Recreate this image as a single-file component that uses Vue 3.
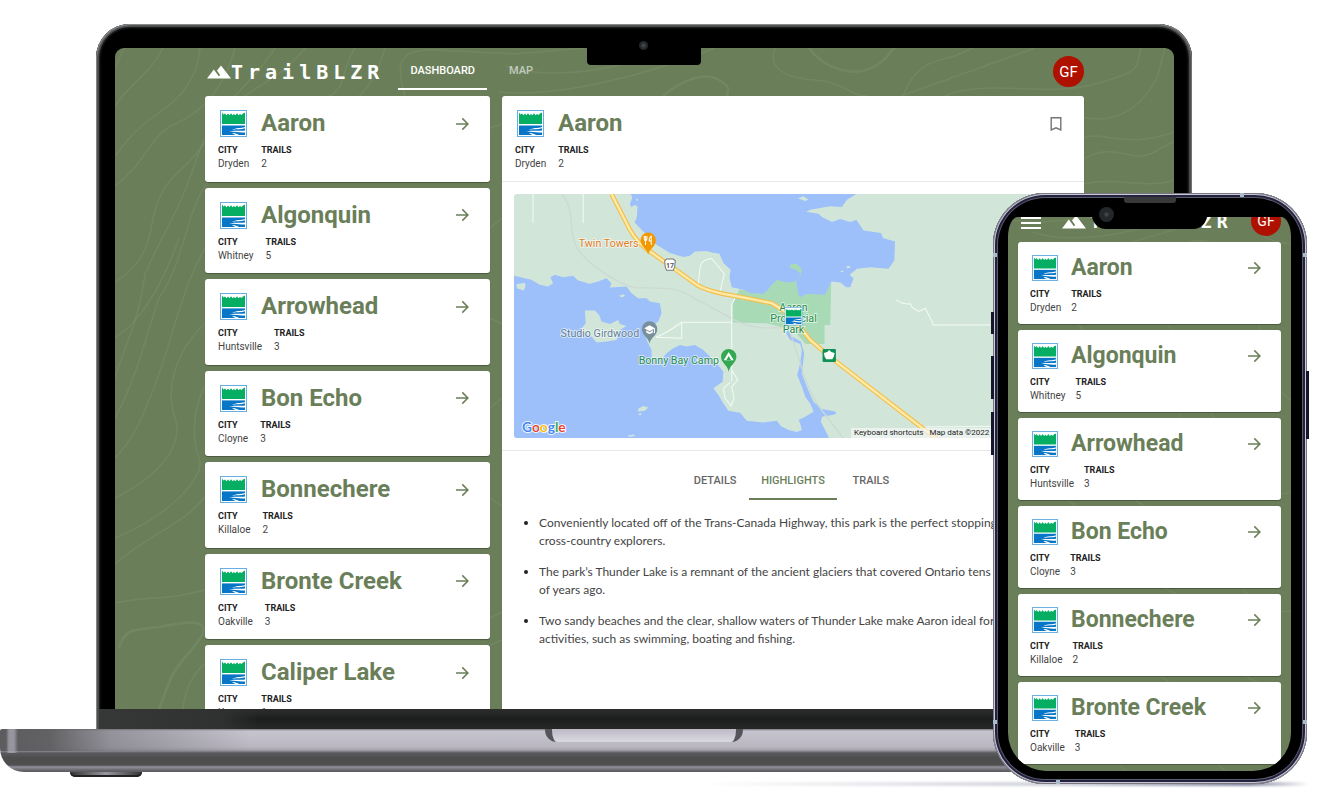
<script setup>
import { ref } from 'vue'

const parks = [
  { name: 'Aaron', city: 'Dryden', trails: 2 },
  { name: 'Algonquin', city: 'Whitney', trails: 5 },
  { name: 'Arrowhead', city: 'Huntsville', trails: 3 },
  { name: 'Bon Echo', city: 'Cloyne', trails: 3 },
  { name: 'Bonnechere', city: 'Killaloe', trails: 2 },
  { name: 'Bronte Creek', city: 'Oakville', trails: 3 },
  { name: 'Caliper Lake', city: 'Kenora', trails: 1 },
]
const phoneParks = parks.slice(0, 6)
const current = parks[0]
const pages = ['Dashboard', 'Map']
const page = ref('Dashboard')
const sections = ['Details', 'Highlights', 'Trails']
const section = ref('Highlights')
const highlights = [
  'Conveniently located off of the Trans-Canada Highway, this park is the perfect stopping point for cross\u2011country explorers.',
  'The park’s Thunder Lake is a remnant of the ancient glaciers that covered Ontario tens of thousands of years ago.',
  'Two sandy beaches and the clear, shallow waters of Thunder Lake make Aaron ideal for water activities, such as swimming, boating and fishing.',
]
const highway = 'M305 13 360 120Q385 165 430 192L500 242 565 288Q590 302 640 312L700 323 785 340 820 362 850 387 900 450 957 499 1280 748'
</script>

<template>
  <div class="scene">
    <svg class="defs" aria-hidden="true">
      <symbol id="park-logo" viewBox="0 0 27 27">
        <rect x="0.5" y="0.5" width="26" height="26" fill="#fff" stroke="#67aee3" />
        <path d="M2 2.600 3.500 4.500 5 3.500 6.500 5.200 8 3.500 9.500 5.200 11 3.200 12.500 5.200 14 4 15.500 5.200 17 3.200 18.500 5.200 20 4 21.500 5 23 3.500 25 2.600V14H2Z" fill="#05ae62" />
        <path d="M2 15.400H25V25H2Z" fill="#0876c6" />
        <path d="M25 17C21 18.600 16 17.400 12 20 17 18.600 21 19.600 25 18.200ZM25 20.400C20 21.600 15 19.600 9 21.600 15 21.400 20 23.200 25 22.400ZM12 23C15 22.600 17 24 19 25H15.500C14 24.200 13 23.600 12 23Z" fill="#fff" />
      </symbol>
      <symbol id="mountains" viewBox="0 0 24 14">
        <path d="M0 13.500 6.800 4.500 10 8.700 11.800 11.300 13.200 10.200 10 5.600 14 0.500 24 13.500Z" fill="#fff" />
      </symbol>
      <symbol id="arrow" viewBox="0 0 14 14">
        <path d="M1 7H12.600M7.300 1.400 12.900 7 7.300 12.600" fill="none" stroke="#6a7f59" stroke-width="1.500" />
      </symbol>
      <symbol id="contours" viewBox="0 0 1059 661" preserveAspectRatio="xMidYMid slice">
        <g fill="none" stroke="#fff" stroke-opacity="0.06" stroke-width="1.500">
          <path d="M9 0 0 20M48 0C34 28 16 34 0 58M85 0C82 36 60 54 42 66S14 90 0 108M120 0C108 44 84 66 60 76S30 116 0 138M190 0C160 40 120 40 96 84 70 130 50 120 38 170 34 200 24 220 0 234" />
          <path d="M160 0C130 46 104 52 84 104 62 170 50 180 30 226 22 280 12 290 0 330M96 130C70 160 72 210 44 250 30 290 22 330 0 370M96 190C70 230 60 280 46 320S20 390 0 410" />
          <path d="M96 270C60 300 50 340 60 370S40 430 0 450M96 330C78 350 76 390 84 410S50 470 0 490M96 440C70 480 40 480 0 516M0 555C34 548 60 552 96 540" />
          <path stroke-width="2.500" d="M4 600C10 578 24 582 44 579 70 574 92 570 88 585 82 600 60 614 52 640L44 661" />
          <path d="M96 612C80 620 70 640 68 661M0 290C30 270 50 230 64 190" />
          <path d="M240 0C226 20 232 40 214 48M270 0C262 26 256 38 244 48M290 48C284 24 276 0 320 2L400 6 470 0M390 18C440 34 510 20 560 0M384 44C440 50 530 28 600 0" />
          <path stroke-width="2.500" d="M548 48C570 30 590 24 604 32S612 44 612 48M694 0C710 22 740 30 760 18S770 6 780 0" />
          <path d="M660 0C652 20 670 30 700 32S734 48 752 48M788 48C800 16 816 14 840 8L858 0M786 48C836 30 870 18 920 0M830 48C870 30 930 50 980 36S1020 20 1026 0M970 70C1010 76 1030 52 1042 30L1050 0" />
          <path d="M968 90C990 82 1010 102 1059 84M968 112C990 96 1010 108 1024 108S1046 98 1059 94M968 136C1000 128 1030 142 1059 132M375 80 387 76M375 180 387 170M375 270 387 276M375 360 387 350M375 450 387 458M375 570 387 564M375 597 387 592" />
          <path d="M400 60C440 120 520 80 560 140S600 300 680 260M420 90C460 180 540 160 560 220S640 360 720 320M400 240C460 260 480 340 560 360S620 480 700 470M410 330C470 340 470 420 540 440S600 560 690 560M400 450C450 460 480 520 530 540S590 640 620 661M640 80C680 120 640 180 700 220M400 560C450 570 470 620 500 661" />
        </g>
      </symbol>
    </svg>

    <section class="laptop" aria-label="Laptop">
      <div class="lid">
        <div class="notch"><i class="lens"></i></div>
        <div class="screen">
          <svg class="contours"><use href="#contours" /></svg>
          <header class="bar">
            <div class="brand">
              <svg class="peaks"><use href="#mountains" /></svg>
              <span class="name">TrailBLZR</span>
            </div>
            <nav class="pages">
              <button
                v-for="item in pages"
                :key="item"
                class="tab"
                :class="{ active: item === page }"
                @click="page = item"
              >{{ item }}</button>
            </nav>
            <button class="avatar">GF</button>
          </header>
          <main class="columns">
            <div class="list">
              <article v-for="park in parks" :key="park.name" class="card">
                <div class="top">
                  <svg class="logo"><use href="#park-logo" /></svg>
                  <h2>{{ park.name }}</h2>
                  <button class="go" :aria-label="'Open ' + park.name">
                    <svg><use href="#arrow" /></svg>
                  </button>
                </div>
                <dl>
                  <div><dt>CITY</dt><dd>{{ park.city }}</dd></div>
                  <div><dt>TRAILS</dt><dd>{{ park.trails }}</dd></div>
                </dl>
              </article>
            </div>

            <section class="detail">
              <div class="summary">
                <div class="top">
                  <svg class="logo"><use href="#park-logo" /></svg>
                  <h2>{{ current.name }}</h2>
                  <button class="go" aria-label="Bookmark">
                    <svg viewBox="0 0 14 14"><path d="M2.200 0.700H11.800V13L7 10.800 2.200 13Z" fill="none" stroke="#757575" stroke-width="1.400" /></svg>
                  </button>
                </div>
                <dl>
                  <div><dt>CITY</dt><dd>{{ current.city }}</dd></div>
                  <div><dt>TRAILS</dt><dd>{{ current.trails }}</dd></div>
                </dl>
              </div>

              <div class="map-area">
                <div class="map">
                  <svg viewBox="13 13 1671 732" preserveAspectRatio="xMinYMin slice" role="img" aria-label="Map of Aaron Provincial Park">
                    <rect x="13" y="13" width="1671" height="740" fill="#d1e6d9" />
                    <path fill="#a8dab5" d="M688 298 722 304 780 260 835 260 832 215 885 220 875 300 963 275 960 405 943 405 943 462 886 462 850 420 770 400 668 398V340Z" />
                    <g fill="#9dc0fb">
                      <path d="M360 13C372 20 366 25 360 44L365 52 374 46 383 50C380 75 385 80 374 98L395 120 440 165 480 190 520 202 540 198 555 185 590 184 605 188 628 192 640 220 662 240 658 262 665 292 700 300 722 310 758 312 770 304 785 285 800 270 830 278 856 275 868 262 870 250 858 240 838 232 842 224 860 222 874 240 870 260 858 275 864 310 870 322 890 312 945 315 963 275 990 278 1008 292 1020 292 1030 265 1018 255 1040 237 1080 232 1135 237 1152 212 1154 155 1118 145 1112 130 1060 122 1038 90 1020 97 990 88 965 97 935 82 925 72 888 66 900 60 960 50 995 52 1010 30 1038 13Z" />
                      <path d="M13 258 65 270 90 285 115 290 130 280 122 262 135 255 160 262 190 258 205 272 240 282 265 275 290 265 305 280 300 293 350 290 365 310 385 325 410 325 420 335 450 340 455 370 445 395 430 405 405 430 412 455 425 480V505L460 502 470 490 490 475 510 465 530 470 555 465 580 480 600 500 620 520 640 545 638 575 610 595 625 615 640 640 655 662 690 668 710 692 760 697 800 692 812 708 835 720 860 726 875 720 870 700 865 690 885 680 910 665 900 640 885 620 875 590 861 555 870 520 875 480 870 462 840 450 828 430 832 422H842V438L872 455 882 490 875 550 890 590 910 635 935 657 975 664 978 670 970 674 935 680 932 695 955 740V753H13Z" />
                    </g>
                    <g fill="#d1e6d9">
                      <path d="M225 362 255 362 268 375 275 395 300 402 325 390 330 402 350 408 330 420 320 450 290 455 260 458 245 440 222 430 214 418 228 400ZM20 283 45 279 48 290 42 302 22 295ZM328 318 340 313 346 318 335 323ZM385 656 400 648 415 652 405 662 384 664ZM355 736 370 733 376 738 356 741ZM864 26 880 20 895 30 884 34ZM1008 230 1018 228 1020 234 1010 236ZM989 244 1000 242 998 248ZM384 672 395 668 392 676ZM377 31 383 26 384 34Z" />
                    </g>
                    <path fill="#a8dab5" d="M856 275 868 262 870 250 858 240 838 232 842 224 860 222 874 240 870 260 858 275Z" />
                    <g fill="none" stroke="#cdd9d3" stroke-width="4">
                      <path d="M155 13C200 60 170 120 205 180 240 230 340 290 380 294 480 295 500 290 560 330 650 370 680 410 760 414H835C870 500 880 600 950 680L1000 745" />
                    </g>
                    <g fill="none" stroke="#f4faf6" stroke-width="3">
                      <path d="M70 13V100M220 13V100M565 285C570 220 570 210 605 206L643 252 630 305M675 325 665 345V575M668 397H515Q470 430 438 442L515 445V397M665 540 683 570 665 590 672 625 663 648 645 625 640 595 660 578M1158 330Q1180 345 1200 342L1205 352 1225 365 1245 355 1268 402V405H1684M1240 711 1684 706" />
                    </g>
                    <path :d="highway" fill="none" stroke="#f3bf4b" stroke-width="14" />
                    <path :d="highway" fill="none" stroke="#fdeaa8" stroke-width="7" />
                    <g>
                      <path d="M464 213 470 208H490L496 213 494 232 490 241H470L466 232Z" fill="#fff" stroke="#777" stroke-width="3" />
                      <text x="480" y="234" text-anchor="middle" font-size="21" font-weight="700" fill="#555">17</text>
                    </g>
                    <g class="labels" font-size="32">
                      <text x="386" y="173" text-anchor="end" fill="#e37c1e">Twin Towers</text>
                      <text x="388" y="440" text-anchor="end" fill="#5d7d94">Studio Girdwood</text>
                      <text x="627" y="522" text-anchor="end" fill="#258d4b">Bonny Bay Camp</text>
                      <g text-anchor="middle" fill="#258d4b">
                        <text x="850" y="364">Aaron</text>
                        <text x="850" y="396">Provincial</text>
                        <text x="850" y="428">Park</text>
                      </g>
                    </g>
                    <path d="M415 195C411 175 392 172 392 151A23 23 0 0 1 438 151C438 172 419 175 415 195Z" fill="#f29900" />
                    <path d="M403 139V148Q403 152 407 153V166M407 139V153M411 139V148Q411 152 407 153M424 166V139Q417 143 418 154H423" fill="none" stroke="#fff" stroke-width="3" />
                    <path d="M419 461C415 440 396 438 396 417A23 23 0 0 1 442 417C442 438 423 440 419 461Z" fill="#78909c" />
                    <path d="M403 415 419 406 435 415 419 424ZM409 421V428Q419 436 429 428V421L419 427ZM432 416H435V430H432Z" fill="#fff" />
                    <path d="M656 545C652 524 633 520 633 500A23 23 0 0 1 679 500C679 520 660 524 656 545Z" fill="#34a853" />
                    <path d="M656 486 671 511H641ZM656 498 649 510H663Z" fill="#fff" fill-rule="evenodd" />
                    <rect x="937" y="477" width="40" height="39" rx="3" fill="#0f9158" />
                    <path d="M957 480 963 486 973 489 971 500 966 508H948L943 500 941 489 951 486Z" fill="#fff" />
                    <use href="#park-logo" x="823" y="350" width="55" height="58" />
                    <text class="google" x="37" y="727" font-size="41"><tspan fill="#4285f4">G</tspan><tspan fill="#ea4335">o</tspan><tspan fill="#fbbc05">o</tspan><tspan fill="#4285f4">g</tspan><tspan fill="#34a853">l</tspan><tspan fill="#ea4335">e</tspan></text>
                  </svg>
                  <div class="credits">
                    <button>Keyboard shortcuts</button>
                    <span>Map data ©2022 Google</span>
                  </div>
                </div>
              </div>

              <nav class="sections">
                <button
                  v-for="item in sections"
                  :key="item"
                  class="tab"
                  :class="{ active: item === section }"
                  @click="section = item"
                >{{ item }}</button>
              </nav>
              <ul class="highlights">
                <li v-for="text in highlights" :key="text">{{ text }}</li>
              </ul>
            </section>
          </main>
        </div>
        <div class="hinge"></div>
      </div>
      <div class="base"><div class="lip"></div></div>
      <div class="foot"></div>
    </section>

    <div class="ground"></div>

    <section class="phone" aria-label="Phone">
      <i class="key mute"></i><i class="key up"></i><i class="key down"></i><i class="key power"></i>
      <i class="band west high"></i><i class="band east high"></i>
      <i class="band west low"></i><i class="band east low"></i>
      <i class="band north"></i><i class="band south"></i>
      <div class="shell">
        <div class="screen">
          <svg class="contours"><use href="#contours" /></svg>
          <header class="bar">
            <button class="menu" aria-label="Menu"><i></i><i></i><i></i></button>
            <div class="brand">
              <svg class="peaks"><use href="#mountains" /></svg>
              <span class="name">TrailBLZR</span>
            </div>
            <button class="avatar">GF</button>
          </header>
          <div class="list">
            <article v-for="park in phoneParks" :key="park.name" class="card">
              <div class="top">
                <svg class="logo"><use href="#park-logo" /></svg>
                <h2>{{ park.name }}</h2>
                <button class="go" :aria-label="'Open ' + park.name">
                  <svg><use href="#arrow" /></svg>
                </button>
              </div>
              <dl>
                <div><dt>CITY</dt><dd>{{ park.city }}</dd></div>
                <div><dt>TRAILS</dt><dd>{{ park.trails }}</dd></div>
              </dl>
            </article>
          </div>
        </div>
      </div>
      <div class="cutout"><i class="lens"></i></div>
      <i class="speaker"></i>
    </section>
  </div>
</template>

<style>
body {
  margin: 0;
  background: #fff;
}
</style>

<style scoped>
.scene {
  position: relative;
  padding-top: 24px;
  overflow: hidden;
  font-family: Roboto, "Liberation Sans", sans-serif;
  color: #333;
}
.defs {
  position: absolute;
  width: 0;
  height: 0;
}
button {
  padding: 0;
  border: 0;
  background: none;
  font: inherit;
  color: inherit;
  cursor: pointer;
}
h2,
dl,
dd {
  margin: 0;
}

/* Laptop */
.laptop {
  width: calc(100% - 31px);
}
.lid {
  position: relative;
  margin: 0 96px;
  padding: 24px 18px 0 19px;
  border-radius: 34px 34px 0 0;
  background: #000;
  box-shadow: inset 1px 1px 1px #8a8b8d, inset -1px 1px 1px #77787a, inset 0 0 0 3px #4a4b4d, inset 0 0 2px 4px #252626;
}
.notch {
  position: absolute;
  z-index: 1;
  top: 22px;
  left: calc(50% - 57px);
  width: 114px;
  height: 19px;
  border-radius: 0 0 4px 4px;
  background: #000;
}
.lens {
  position: absolute;
  border-radius: 50%;
  background: radial-gradient(#41464a 0 1px, #25282a 3px);
}
.notch .lens {
  top: -5px;
  left: 52px;
  width: 9px;
  height: 9px;
}
.screen {
  position: relative;
  overflow: hidden;
  background: #6a7f59;
}
.lid .screen {
  height: 661px;
  padding: 0 90px;
  border-radius: 9px 9px 0 0;
}
.contours {
  position: absolute;
  inset: 0;
  width: 100%;
  height: 100%;
}
.bar {
  position: relative;
  display: flex;
  align-items: center;
}
.lid .bar {
  height: 37px;
  padding: 5px 0 6px;
}
.brand {
  display: flex;
  align-items: center;
  color: #fff;
}
.peaks {
  width: 24px;
  height: 14px;
}
.name {
  font: 700 20px/28px "DejaVu Sans Mono", monospace;
  letter-spacing: 5px;
}
.lid .brand {
  padding-left: 2px;
}
.tab {
  min-width: 68px;
  padding: 0 12px;
  border-bottom: 2px solid transparent;
  font-size: 11px;
  font-weight: 500;
  text-transform: uppercase;
}
.pages {
  display: flex;
  align-self: stretch;
  margin-left: 14px;
}
.pages .tab {
  color: rgba(255, 255, 255, 0.6);
}
.pages .active {
  border-color: #fff;
  color: #fff;
}
.avatar {
  width: 31px;
  height: 31px;
  margin-left: auto;
  border-radius: 50%;
  background: #ae1100;
  color: #fff;
  font-size: 15px;
}
.columns {
  position: relative;
  display: flex;
  align-items: flex-start;
  gap: 12px;
}
.list {
  position: relative;
  display: grid;
  gap: 6px;
}
.lid .list {
  flex: 0 0 285px;
  grid-template-rows: repeat(7, 1fr);
  height: 635px;
}
.card,
.detail {
  border-radius: 3px;
  background: #fff;
  box-shadow: 0 1px 1px rgba(0, 0, 0, 0.3);
}
.card,
.summary {
  padding: 13px 13px 11px;
}
.top {
  display: flex;
  align-items: center;
  height: 29px;
}
.logo {
  width: 27px;
  height: 27px;
  margin: 0 14px 0 2px;
}
h2 {
  font-size: 24px;
  line-height: 29px;
  color: #6a7f59;
}
.go {
  display: flex;
  margin: 0 8px 0 auto;
}
.go svg {
  width: 14px;
  height: 14px;
}
dl {
  display: flex;
  gap: 12px;
  margin-top: 6px;
  font-size: 10px;
  line-height: 13px;
}
dt {
  font-size: 9px;
  font-weight: 700;
  color: #222;
}
dd {
  color: #444;
}
.detail {
  flex: 1;
  min-width: 0;
  min-height: 640px;
}
.summary {
  border-bottom: 1px solid #e8e8e8;
}
.map-area {
  padding: 12px;
  border-bottom: 1px solid #e8e8e8;
}
.map {
  position: relative;
  height: 244px;
  overflow: hidden;
  border-radius: 3px;
}
.map > svg {
  display: block;
  width: 100%;
  height: 100%;
}
.labels text,
.google {
  paint-order: stroke;
  stroke: rgba(255, 255, 255, 0.7);
  stroke-width: 5px;
}
.google {
  font-family: Lato, sans-serif;
  font-weight: 700;
  stroke: #fff;
}
.credits {
  position: absolute;
  right: 0;
  bottom: 0;
  display: flex;
  width: 221px;
  font-size: 8px;
  line-height: 10px;
  color: #222;
  white-space: nowrap;
}
.credits > * {
  padding: 0 3px;
  background: rgba(243, 245, 244, 0.75);
}
.credits span {
  flex: 1;
}
.sections {
  display: flex;
  justify-content: center;
  height: 37px;
  margin-top: 12px;
}
.sections .tab {
  color: #666;
}
.sections .active {
  border-color: #6a7f59;
  color: #6a7f59;
}
.highlights {
  display: grid;
  gap: 13px;
  margin: 14px 12px 0 37px;
  padding: 0;
  font: 12px/18px Lato, sans-serif;
  color: #444;
}
.highlights li::marker {
  color: #222;
}
.hinge {
  height: 20px;
  margin: 0 -15px 0 -16px;
  background: linear-gradient(90deg, #363837, #303231 120px, transparent 160px), linear-gradient(#2c2e2d, #1b1e1d 50%, #252827);
}
.base {
  display: flex;
  justify-content: center;
  height: 43px;
  border-radius: 2px 2px 24px 24px;
  background:
    linear-gradient(90deg, transparent 6px, rgba(175, 172, 186, 0.7) 9px 14px, transparent 18px) 0 0 / 100% 24px no-repeat,
    linear-gradient(90deg, #5c5c5e 0, #626264 50px, rgba(115, 113, 120, 0.6) 110px, transparent 250px) 0 0 / 100% 22px no-repeat,
    linear-gradient(#77777a 0, #c6c4ce 2px, #b9b6c2 18px, #a5a3ad 21px, #5a595e 24px, #4d4d4e 29px, #505050 36px, #92909b 38px, #77757c 40px, #5e5d61 42px);
}
.lip {
  width: 184px;
  height: 13px;
  border: solid #55545a;
  border-width: 0 7px;
  border-radius: 0 0 12px 12px;
  background: linear-gradient(#bdbac6, #dad8df);
}
.foot {
  width: 72px;
  height: 5px;
  margin-left: 70px;
  border-radius: 0 0 8px 8px;
  background: linear-gradient(90deg, #333, #99979f 50%, #333);
  box-shadow: inset 0 -2px #222;
}
.ground {
  height: 4px;
  margin: 5px 10px 16px 700px;
  background: linear-gradient(90deg, transparent, #cfd1da 60%, #8488a0 90%, transparent);
  filter: blur(1px);
}

/* Phone */
.phone {
  position: absolute;
  top: 193px;
  right: 12px;
  width: 314px;
}
.shell {
  padding: 24px 16px 13px 15px;
  border-radius: 52px;
  background: #000;
  box-shadow: inset 0 0 0 1px #777682, inset 0 0 0 2px #c9c8d4, inset 0 0 0 4px #24233f, inset 0 0 0 5px #5b5b70;
}
.phone .screen {
  height: 554px;
  padding: 0 10px;
  border-radius: 10px 10px 38px 38px / 20px 20px 38px 38px;
}
.phone .bar {
  height: 30px;
  margin: -11px 0 6px;
}
.menu {
  display: grid;
  gap: 3px;
  width: 20px;
  margin: 0 21px 0 3px;
  padding-top: 3px;
}
.menu i {
  height: 2px;
  background: #fff;
}
.phone .name {
  padding-left: 4px;
  font-size: 18px;
}
.phone .peaks,
.phone .name {
  margin-top: 2px;
}
.phone .avatar {
  width: 30px;
  height: 30px;
  font-size: 14px;
}
.phone .list {
  grid-auto-rows: 82px;
}
.phone .card {
  padding: 12px 12px 10px;
}
.phone .top {
  height: 28px;
}
.phone h2 {
  font-size: 23px;
  line-height: 28px;
}
.phone .logo {
  width: 26px;
  height: 26px;
  margin-right: 13px;
}
.phone dl {
  gap: 10px;
}
.cutout {
  position: absolute;
  top: 20px;
  left: 99px;
  width: 115px;
  height: 16px;
  border-radius: 0 0 14px 14px;
  background: #000;
}
.cutout .lens {
  top: -6px;
  left: 7px;
  width: 15px;
  height: 15px;
}
.speaker {
  position: absolute;
  top: 4px;
  left: 131px;
  width: 52px;
  height: 6px;
  border-radius: 0 0 3px 3px;
  background: #38393a;
}
.key {
  position: absolute;
  left: -2px;
  width: 3px;
  background: #16152a;
}
.mute {
  top: 119px;
  height: 22px;
}
.up {
  top: 163px;
  height: 43px;
}
.down {
  top: 219px;
  height: 43px;
}
.power {
  top: 178px;
  right: -2px;
  left: auto;
  height: 68px;
}
.band {
  position: absolute;
  z-index: 1;
  width: 4px;
  height: 4px;
  background: #a9bccd;
}
.west {
  left: 0;
}
.east {
  right: 0;
}
.high {
  top: 60px;
}
.low {
  bottom: 60px;
}
.north {
  top: 0;
  right: 63px;
}
.south {
  bottom: 0;
  left: 63px;
}
</style>
